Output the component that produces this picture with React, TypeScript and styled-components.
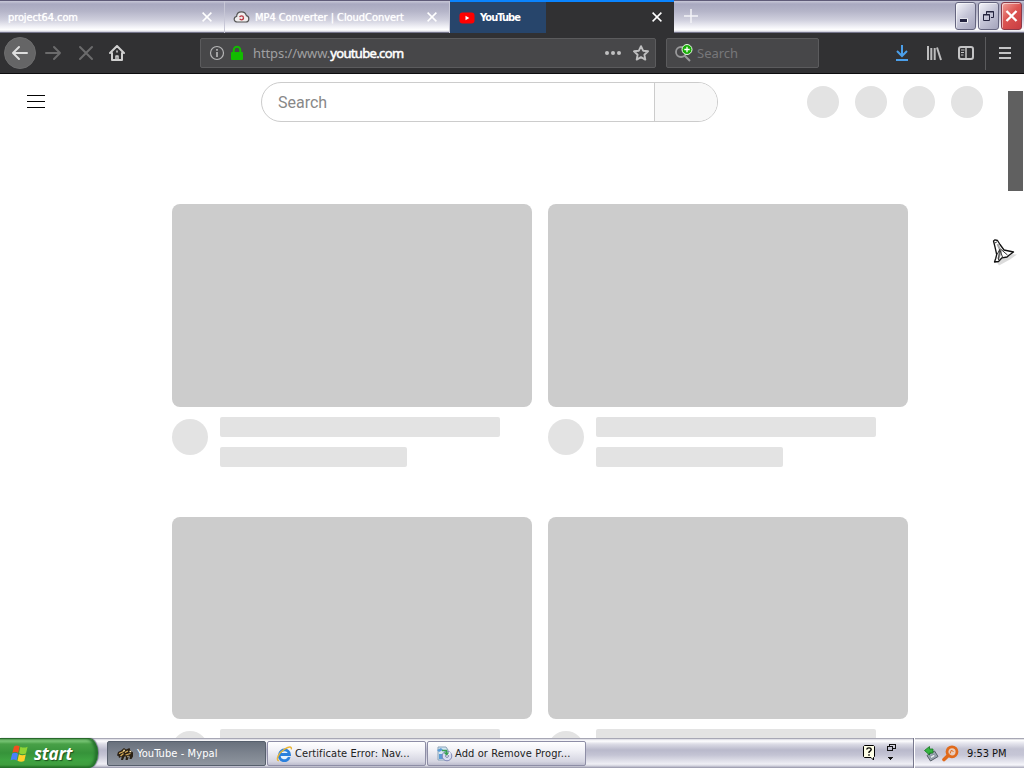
import React from 'react';
import styled, { createGlobalStyle } from 'styled-components';

const GlobalStyle = createGlobalStyle`
	* {
		box-sizing: border-box;
	}
	body {
		margin: 0;
		overflow: hidden;
		background: #fff;
	}
	svg {
		display: block;
		flex: none;
	}
`;

const Desktop = styled.div`
	width: 1024px;
	height: 768px;
	display: flex;
	flex-direction: column;
	overflow: hidden;
	font-family: 'DejaVu Sans Condensed', 'DejaVu Sans', sans-serif;
	font-stretch: condensed;
	font-size: 11px;
`;

const Label = styled.span<{ $spacing?: number }>`
	white-space: nowrap;
	letter-spacing: ${({ $spacing = 0 }) => $spacing}px;
`;

/* Tab strip */

const TabStrip = styled.div`
	height: 33px;
	flex: none;
	display: flex;
	border-top: 1px solid #5f5b78;
	border-bottom: 1px solid #74748a;
	background: linear-gradient(#c8c8d8 0, #a9a9c0 3px, #b4b4c8 10px, #cfcfdd 19px, #f2f2f7 26px, #fff 29px, #c5c5d4 31px);
`;

const Tab = styled.div`
	width: 225px;
	height: 32px;
	padding: 0 12px 0 8px;
	display: flex;
	align-items: center;
	gap: 5px;
	color: #fff;
	border-right: 1px solid #c7c7d6;
	text-shadow: 0 0 1px #fff;
`;

const ActiveTab = styled.div`
	width: 224px;
	height: 33px;
	display: flex;
	margin-top: -1px;
	background: #313133;
	border-top: 2px solid #0a84ff;
	color: #fff;
	font-weight: bold;
`;

const ActiveTabTitle = styled.div`
	width: 96px;
	height: 31px;
	padding-left: 9px;
	display: flex;
	align-items: center;
	gap: 5px;
	background: #27456b;
`;

const ActiveTabEnd = styled.div`
	flex: 1;
	display: flex;
	align-items: center;
	justify-content: flex-end;
	padding: 0 12px 2px 0;
`;

const TabClose = styled.div`
	margin-left: auto;
`;

const NewTab = styled.div`
	padding: 8px 0 0 10px;
`;

const WindowButtons = styled.div`
	margin-left: auto;
	padding: 1px 2px 0 0;
	display: flex;
	gap: 2px;
`;

const WindowButton = styled.div<{ $close?: boolean }>`
	width: 21px;
	height: 28px;
	border: 1px solid ${({ $close }) => ($close ? '#8c3a49' : '#65657f')};
	border-radius: 3px;
	box-shadow: inset 1px 1px 0 rgba(255, 255, 255, 0.55);
	background: ${({ $close }) =>
		$close ? 'linear-gradient(135deg, #efa29b, #dc5552 45%, #c83c42)' : 'linear-gradient(135deg, #f4f4fa, #c5c5d7 50%, #a3a3bb)'};
`;

/* Navigation bar */

const NavBar = styled.div`
	height: 41px;
	flex: none;
	display: flex;
	align-items: center;
	padding: 0 12px 0 4px;
	background: #313133;
	border-bottom: 1px solid #0d0d0e;
	color: #b9b9ba;
`;

const BackButton = styled.div`
	width: 32px;
	height: 32px;
	border-radius: 50%;
	background: #656566;
	border: 1px solid #6d6d6e;
	display: flex;
	align-items: center;
	justify-content: center;
`;

const NavIcons = styled.div`
	width: 164px;
	padding-left: 9px;
	display: flex;
	gap: 15.5px;
`;

const Field = styled.div<{ $width: number }>`
	width: ${({ $width }) => $width}px;
	height: 30px;
	display: flex;
	align-items: center;
	background: #474749;
	border: 1px solid #5b5b5d;
	border-radius: 2px;
	font-family: 'Noto Sans', sans-serif;
	font-stretch: normal;
	font-size: 13px;
`;

const UrlField = styled(Field)`
	padding: 0 6px 0 8px;
	gap: 4px;
`;

const SearchField = styled(Field)`
	margin-left: 10px;
	padding-left: 7px;
	gap: 4px;
	color: #77777a;
`;

const Url = styled.span`
	flex: 1;
	padding-left: 4px;
	color: #a0a0a2;
	letter-spacing: -0.1px;

	b {
		color: #fff;
		font-weight: 400;
		letter-spacing: -0.65px;
		-webkit-text-stroke: 0.5px #fff;
	}
`;

const UrlActions = styled.div`
	display: flex;
	align-items: center;
	gap: 12px;
`;

const Tools = styled.div`
	margin-left: auto;
	display: flex;
	align-items: center;
	gap: 16px;
`;

const Divider = styled.div`
	width: 1px;
	height: 33px;
	margin: 0 -4px 0 -5px;
	background: #5b5b5d;
`;

/* Page */

const Page = styled.main`
	flex: 1;
	min-height: 0;
	display: flex;
	overflow: hidden;
	background: #fff;
`;

const PageBody = styled.div`
	width: 1008px;
	overflow: hidden;
`;

const ScrollTrack = styled.div`
	width: 16px;
	padding: 17px 1px 0 0;
`;

const ScrollThumb = styled.div`
	height: 100px;
	background: #606060;
`;

const Masthead = styled.header`
	height: 56px;
	display: flex;
	align-items: center;
	padding: 0 25px 0 24px;
`;

const SearchBox = styled.div`
	width: 457px;
	height: 40px;
	margin-left: 213px;
	display: flex;
	border: 1px solid #ccc;
	border-radius: 20px;
	overflow: hidden;
`;

const SearchInput = styled.div`
	width: 393px;
	padding-left: 16px;
	border-right: 1px solid #ccc;
	font: 16px/40px Roboto, sans-serif;
	color: #888;
`;

const SearchButton = styled.div`
	flex: 1;
	background: #f8f8f8;
`;

const MastheadIcons = styled.div`
	margin-left: auto;
	display: flex;
	gap: 16px;
`;

const Circle = styled.div<{ $size: number }>`
	width: ${({ $size }) => $size}px;
	height: ${({ $size }) => $size}px;
	flex: none;
	border-radius: 50%;
	background: #e3e3e3;
`;

const VideoGrid = styled.div`
	padding: 74px 0 0 172px;
	display: grid;
	grid-template-columns: 360px 360px;
	column-gap: 16px;
	row-gap: 50px;
`;

const Thumbnail = styled.div`
	height: 202.5px;
	border-radius: 8px;
	background: #ccc;
`;

const Details = styled.div`
	display: flex;
	gap: 12px;
	padding-top: 12px;
`;

const Lines = styled.div`
	margin-top: -2px;
`;

const Line = styled.div<{ $width: number }>`
	width: ${({ $width }) => $width}px;
	height: 20px;
	margin-bottom: 10px;
	border-radius: 2px;
	background: #e3e3e3;

	&:last-child {
		margin-bottom: 0;
	}
`;

const Cursor = styled.div`
	position: absolute;
	left: 991px;
	top: 238px;
`;

/* Taskbar */

const Taskbar = styled.footer`
	height: 30px;
	flex: none;
	display: flex;
	background: linear-gradient(#77778a 0, #d7d7e0 1px, #fff 3px, #dcdce6 6px, #b9b9cb 12px, #c4c4d4 17px, #efeff5 26px, #d0d0dc 28px, #9292a5 30px);
`;

const StartButton = styled.div`
	width: 98px;
	height: 30px;
	padding: 0 0 1px 10px;
	display: flex;
	align-items: center;
	gap: 5px;
	border-radius: 0 9px 9px 0 / 0 15px 15px 0;
	border-top: 1px solid #28692b;
	background: linear-gradient(#74bd70 0, #7cc878 2px, #48a047 5px, #36933a 14px, #3ea341 21px, #3f9d3e 26px, #226b25);
	box-shadow: inset -3px 0 3px #23702a, 1px 0 1px #73738a;
	color: #fff;
	font: italic bold 17px 'Open Sans', sans-serif;
	letter-spacing: -0.2px;
	text-shadow: 1px 1px 1px #1b501c;
`;

const Tasks = styled.div`
	padding: 3px 0 0 9px;
	display: flex;
	gap: 1px;
`;

const Task = styled.div<{ $active?: boolean }>`
	width: 159px;
	height: 25px;
	padding-left: ${({ $active }) => ($active ? 9 : 8)}px;
	display: flex;
	align-items: center;
	gap: ${({ $active }) => ($active ? 3 : 2)}px;
	border: 1px solid ${({ $active }) => ($active ? '#565f6c' : '#8e8ea6')};
	border-radius: 2px;
	color: ${({ $active }) => ($active ? '#fff' : '#222')};
	background: ${({ $active }) =>
		$active ? 'linear-gradient(#69717d, #7b828d 45%, #8f959f)' : 'linear-gradient(#fff, #f2f2f7 35%, #d5d5e1 85%, #bdbdce)'};
`;

const Language = styled.div`
	margin-left: auto;
	padding: 6px 17px 0 0;
	display: flex;
	gap: 11px;
`;

const Tray = styled.div`
	width: 111px;
	padding-left: 9px;
	display: flex;
	align-items: center;
	gap: 3px;
	border-left: 1px solid #77778d;
	box-shadow: inset 1px 0 0 #fff;
	background: linear-gradient(#8a8a9c 0, #fff 2px, #e7e7ef 5px, #c2c2d2 11px, #c6c6d6 17px, #f6f6fb 27px, #a6a6b8 30px);
	color: #111;
`;

const Clock = styled.span`
	margin-left: 5px;
	white-space: nowrap;
	letter-spacing: -0.05px;
`;

const CrossIcon: React.FC<{ size?: number; width?: number }> = ({ size = 10, width = 1.5 }) => (
	<svg width={size} height={size} viewBox="0 0 10 10" fill="none" stroke="currentColor" strokeWidth={width}>
		<path d="M.6.6l8.8 8.8M9.4.6L.6 9.4" />
	</svg>
);

const CloudIcon = () => (
	<svg width="17" height="12" viewBox="0 0 17 12" fill="#f1eeee" stroke="#555" strokeWidth="1.200">
		<path d="M4.500 11C2.400 11 1.200 9.800 1.200 8.200c0-1.500 1-2.500 2.400-2.700C3.700 2.700 5.800.8 8.500.8s4.300 1.500 4.900 3.900c1.500.4 2.400 1.500 2.400 3 0 1.900-1.300 3.300-3.200 3.300z" />
		<circle cx="8.500" cy="6.800" r="2" stroke="#b8323c" strokeWidth="1.300" strokeDasharray="4.800 1.480" />
	</svg>
);

const YouTubeIcon = () => (
	<svg width="16" height="12" viewBox="0 0 16 12">
		<rect x=".5" y=".5" width="15" height="11" rx="3" fill="#f00" />
		<path d="M6.500 3.800v4.400L10.300 6z" fill="#fff" />
	</svg>
);

const BackIcon = () => (
	<svg width="18" height="16" viewBox="0 0 18 16" fill="none" stroke="#dedede" strokeWidth="2" strokeLinecap="round" strokeLinejoin="round">
		<path d="M16 8H2M8 2L2 8l6 6" />
	</svg>
);

const ForwardIcon = () => (
	<svg width="17" height="16" viewBox="0 0 17 16" fill="none" stroke="#6b6b6c" strokeWidth="2" strokeLinecap="round" strokeLinejoin="round">
		<path d="M1 8h14M9 2l6 6-6 6" />
	</svg>
);

const StopIcon = () => (
	<svg width="16" height="16" viewBox="0 0 16 16" fill="none" stroke="#6b6b6c" strokeWidth="2" strokeLinecap="round">
		<path d="M2 2l12 12M14 2L2 14" />
	</svg>
);

const HomeIcon = () => (
	<svg width="16" height="16" viewBox="0 0 16 16" fill="none" stroke="#d0d0d0" strokeWidth="2" strokeLinejoin="round" strokeLinecap="round">
		<path d="M1 8l7-7 7 7M3 8v7h10V8" />
		<path d="M7 15v-4h2v4" strokeWidth="1.500" />
		<path d="M8 6v1" strokeWidth="1.500" />
	</svg>
);

const InfoIcon = () => (
	<svg width="16" height="16" viewBox="0 0 16 16" fill="none" stroke="#b5b5b6">
		<circle cx="8" cy="8" r="6.500" strokeWidth="1.200" />
		<path d="M8 7v5M8 4v1.700" strokeWidth="1.700" />
	</svg>
);

const LockIcon = () => (
	<svg width="16" height="16" viewBox="0 0 16 16">
		<path d="M4.700 8V5a3.300 3.300 0 016.600 0v3" fill="none" stroke="#12bc00" strokeWidth="2" />
		<rect x="2" y="7" width="12" height="8" rx="1" fill="#12bc00" />
	</svg>
);

const DotsIcon = () => (
	<svg width="16" height="6" viewBox="0 0 16 6" fill="#c0c0c1">
		<circle cx="2" cy="3" r="2" />
		<circle cx="8" cy="3" r="2" />
		<circle cx="14" cy="3" r="2" />
	</svg>
);

const StarIcon = () => (
	<svg width="16" height="16" viewBox="0 0 16 16" fill="none" stroke="#c0c0c1" strokeWidth="1.900" strokeLinejoin="round">
		<path d="M8 1.200l2.100 4.500 4.900.6-3.600 3.400.9 4.900L8 12.200l-4.300 2.400.9-4.900L1 6.300l4.900-.6z" />
	</svg>
);

const SearchAddIcon = () => (
	<svg width="19" height="18" viewBox="0 0 19 18" fill="none">
		<circle cx="7" cy="8" r="5" stroke="#99999b" strokeWidth="1.800" />
		<path d="M10.500 11.500L16 17" stroke="#99999b" strokeWidth="2" />
		<circle cx="13" cy="5.500" r="5" fill="#17ac05" stroke="#e9f8e7" />
		<path d="M10.300 5.500h5.400M13 2.800v5.400" stroke="#fff" strokeWidth="1.300" />
	</svg>
);

const DownloadIcon = () => (
	<svg width="16" height="16" viewBox="0 0 16 16" fill="none" stroke="#4b9fea" strokeWidth="2">
		<path d="M8 0v11M3 6l5 5 5-5M2 15h12" />
	</svg>
);

const LibraryIcon = () => (
	<svg width="16" height="16" viewBox="0 0 16 16" fill="none" stroke="#bdbdbe">
		<path d="M2 1v14M5.300 3v12M8.700 3v12M11 2.500L15 15" strokeWidth="2" />
	</svg>
);

const SidebarIcon = () => (
	<svg width="16" height="16" viewBox="0 0 16 16" fill="none" stroke="#c4c4c5" strokeWidth="2">
		<rect x="1" y="2" width="14" height="12" rx="2" />
		<path d="M8 2v12" strokeWidth="1.500" />
		<path d="M3 5h3.500M3 7.500h3M3 10h2.500" strokeWidth="1" />
	</svg>
);

const MenuIcon = () => (
	<svg width="14" height="14" viewBox="0 0 14 14" stroke="#c4c4c5" strokeWidth="2">
		<path d="M1 2h12M1 7h12M1 12h12" />
	</svg>
);

const GuideIcon = () => (
	<svg width="24" height="24" viewBox="0 0 24 24" stroke="#030303" shapeRendering="crispEdges">
		<path d="M3 5.500h18M3 11.500h18M3 17.500h18" />
	</svg>
);

const FlagIcon = () => (
	<svg width="19" height="18" viewBox="0 0 19 18">
		<path d="M4 2.500Q6.500.5 9.600 2.200L8.200 9Q5.500 7 2.400 8.700z" fill="#f0501f" />
		<path d="M10.400 2.700q3.500 1.800 7.200 0L16 9.600q-3.500 1.600-6.900-.3z" fill="#8fd435" />
		<path d="M2.200 9.500Q5.300 7.800 8 9.800L6.600 16.500q-2.700-1.900-6-.3z" fill="#4a80fa" />
		<path d="M8.900 10.200q3.400 1.800 6.900.2L14.300 17q-3.400 1.500-6.800-.3z" fill="#ffd02a" />
	</svg>
);

const RaccoonIcon = () => (
	<svg width="17" height="14" viewBox="0 0 17 14">
		<path d="M1 5l3-1.500L7 1l2 1.500L12.500 1l.7 2L16 5.500v4L14.500 12h-2l.5-3-1 .5-1.300 3.500H8.500l.5-3.500H7.500L6 13H4l.7-3.500L2 11l-.5-2L0 8.500z" fill="#2a2115" />
		<path d="M2 6.500l4-1.800L7.500 3M3.500 9l3-2.500M8 5.500L11 4M8.500 8l5-1.500" stroke="#d9ae5a" strokeWidth="1.200" fill="none" />
		<path d="M6.500 3.500h1.200M12.500 4.500h1.800M10.500 9.500h1" stroke="#fbefc5" strokeWidth="1.300" />
	</svg>
);

const IeIcon = () => (
	<svg width="17" height="16" viewBox="0 0 17 16" fill="none">
		<circle cx="8.500" cy="8.500" r="5" fill="#e6f3ff" />
		<path d="M13.200 11A5 5 0 113.500 8.500h10a5 5 0 00-9.900-.5" stroke="#2b80dc" strokeWidth="2.800" />
		<path d="M2.800 14.800C-.8 14 2.800 6.500 9 2.800 13 .4 16 .2 15.300 3.300" stroke="#e9b535" strokeWidth="1.400" />
	</svg>
);

const ProgramsIcon = () => (
	<svg width="17" height="16" viewBox="0 0 17 16">
		<path d="M2 1h8l2 3v10H2z" fill="#d5e6f3" stroke="#8aa3b8" />
		<path d="M1 4l4-2 2 2-4 2zM3 8h4v5H3z" fill="#5b9bd4" />
		<circle cx="11" cy="10" r="4.800" fill="#d7dcf0" stroke="#8088b8" />
		<path d="M11 10l2-4.300 2 1.600z" fill="#f8faff" />
		<circle cx="11" cy="10" r="1.400" fill="#fff" stroke="#7c86a8" />
		<path d="M6 4.500h4.500V8M8.500 6.500l2 2 2-2" fill="none" stroke="#36a151" strokeWidth="1.400" />
	</svg>
);

const HelpIcon = () => (
	<svg width="14" height="17" viewBox="0 0 14 17">
		<path d="M1.500 2.500l1-1h9l1 1v10l-1 1V16l-2.500-2.500H2.500l-1-1z" fill="#ffffe6" stroke="#000" />
		<path d="M4.700 5.500Q4.900 3.900 7 3.900t2.200 1.500Q9.200 6.500 7 8v1M7 10.300v1.500" fill="none" stroke="#000" strokeWidth="1.400" />
	</svg>
);

const RestoreArrowIcon = () => (
	<svg width="9" height="18" viewBox="0 0 9 18" fill="none" stroke="#111" shapeRendering="crispEdges">
		<path d="M2.500 3V.5h6v4H6M.5 2.500h5v3.500h-5z" />
		<path d="M1 13h5L3.500 16z" fill="#111" stroke="none" />
	</svg>
);

const DeviceIcon = () => (
	<svg width="16" height="17" viewBox="0 0 16 17">
		<path d="M4 10.500L11.500 6l3.500 5.500L7.500 16z" fill="#9aa6b2" stroke="#555d66" />
		<path d="M7 11.500l4-2.300 1.300 2-4 2.300z" fill="#e5e9ee" stroke="#6a7684" strokeWidth=".6" />
		<path d="M1.500 5.500l5-4V4H10v4H6.500v2z" fill="#35b440" stroke="#147822" strokeWidth=".8" />
	</svg>
);

const MagnifierIcon = () => (
	<svg width="17" height="17" viewBox="0 0 17 17" fill="none" stroke="#e06a1c">
		<path d="M6.500 10.200L2 14.500" strokeWidth="3.600" strokeLinecap="round" />
		<circle cx="10" cy="6.800" r="5" strokeWidth="2.800" fill="#e9cdbd" />
		<path d="M8 8.500l1.500-3.500 2 2" strokeWidth="1" />
	</svg>
);

const CursorIcon = () => (
	<svg width="28" height="30" viewBox="0 0 28 30">
		<path d="M6 6l6 4 5 6 9 .5-7 5-11 6-2-3z" fill="#000" opacity=".14" />
		<path d="M2.500 3L4 1.800l2.500.7L9 6.500l4 5.500 9.500 2-4.500 3.200-2 1.800-5 .8L7.500 23.500l-4 .5 1.200-3.500 1-4L4 9z" fill="#fff" stroke="#111" strokeWidth="1.300" strokeLinejoin="round" />
		<path d="M6.500 6l3.500 8-3 7" fill="none" stroke="#aaa" strokeWidth="2" />
		<path d="M3 5.500l2.800-1.500M6 16.500L8.500 12 7.500 22M8.500 11l3 8M9.500 11l7 6" fill="none" stroke="#333" />
	</svg>
);

const VideoCard = () => (
	<div>
		<Thumbnail />
		<Details>
			<Circle $size={36} />
			<Lines>
				<Line $width={280} />
				<Line $width={187} />
			</Lines>
		</Details>
	</div>
);

const App: React.FC = () => (
	<Desktop>
		<GlobalStyle />
		<TabStrip>
			<Tab>
				<Label $spacing={-0.1}>project64.com</Label>
				<TabClose><CrossIcon /></TabClose>
			</Tab>
			<Tab>
				<CloudIcon />
				<Label $spacing={-0.05}>MP4 Converter | CloudConvert</Label>
				<TabClose><CrossIcon /></TabClose>
			</Tab>
			<ActiveTab>
				<ActiveTabTitle>
					<YouTubeIcon />
					<Label $spacing={-0.9}>YouTube</Label>
				</ActiveTabTitle>
				<ActiveTabEnd><CrossIcon /></ActiveTabEnd>
			</ActiveTab>
			<NewTab>
				<svg width="14" height="14" viewBox="0 0 14 14" stroke="#f4f4f8" strokeWidth="1.500">
					<path d="M7 0v14M0 7h14" />
				</svg>
			</NewTab>
			<WindowButtons>
				<WindowButton>
					<svg width="19" height="26"><path d="M4 17.500h8" stroke="#fff" strokeWidth="4" /><path d="M4 17.500h7" stroke="#24243f" strokeWidth="3" /></svg>
				</WindowButton>
				<WindowButton>
					<svg width="19" height="26" fill="none" stroke="#24243f"><path d="M7.500 11V8.500h7v6H12M7 9h8M4.500 11.500h6v6h-6zM4 12h7" /></svg>
				</WindowButton>
				<WindowButton $close>
					<svg width="19" height="26" fill="none" stroke="#fff" strokeWidth="2.300"><path d="M4.500 8l10 10M14.500 8l-10 10" /></svg>
				</WindowButton>
			</WindowButtons>
		</TabStrip>
		<NavBar>
			<BackButton><BackIcon /></BackButton>
			<NavIcons>
				<ForwardIcon />
				<StopIcon />
				<HomeIcon />
			</NavIcons>
			<UrlField $width={456}>
				<InfoIcon />
				<LockIcon />
				<Url>https://www.<b>youtube.com</b></Url>
				<UrlActions>
					<DotsIcon />
					<StarIcon />
				</UrlActions>
			</UrlField>
			<SearchField $width={153}>
				<SearchAddIcon />
				<span>Search</span>
			</SearchField>
			<Tools>
				<DownloadIcon />
				<LibraryIcon />
				<SidebarIcon />
				<Divider />
				<MenuIcon />
			</Tools>
		</NavBar>
		<Page>
			<PageBody>
				<Masthead>
					<GuideIcon />
					<SearchBox>
						<SearchInput>Search</SearchInput>
						<SearchButton />
					</SearchBox>
					<MastheadIcons>
						{[0, 1, 2, 3].map((i) => (
							<Circle key={i} $size={32} />
						))}
					</MastheadIcons>
				</Masthead>
				<VideoGrid>
					{[0, 1, 2, 3].map((i) => (
						<VideoCard key={i} />
					))}
				</VideoGrid>
			</PageBody>
			<ScrollTrack>
				<ScrollThumb />
			</ScrollTrack>
		</Page>
		<Taskbar>
			<StartButton>
				<FlagIcon />
				start
			</StartButton>
			<Tasks>
				<Task $active>
					<RaccoonIcon />
					<Label $spacing={0.08}>YouTube - Mypal</Label>
				</Task>
				<Task>
					<IeIcon />
					<Label $spacing={0.08}>Certificate Error: Nav...</Label>
				</Task>
				<Task>
					<ProgramsIcon />
					<Label $spacing={0.1}>Add or Remove Progr...</Label>
				</Task>
			</Tasks>
			<Language>
				<HelpIcon />
				<RestoreArrowIcon />
			</Language>
			<Tray>
				<DeviceIcon />
				<MagnifierIcon />
				<Clock>9:53 PM</Clock>
			</Tray>
		</Taskbar>
		<Cursor><CursorIcon /></Cursor>
	</Desktop>
);

export default App;
